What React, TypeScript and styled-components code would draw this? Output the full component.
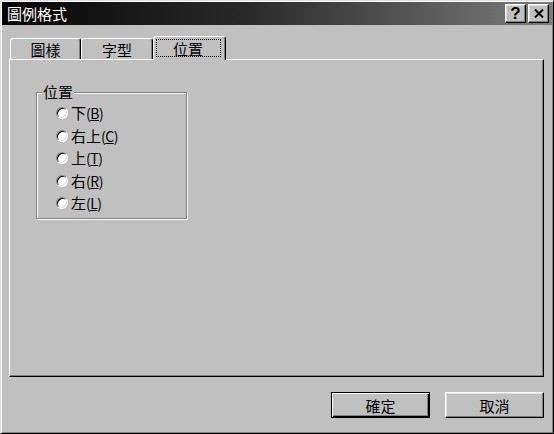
import * as React from 'react';
import styled, { createGlobalStyle } from 'styled-components';

const GlobalStyle = createGlobalStyle`
    html, body {
        margin: 0;
        padding: 0;
        background: #c0c0c0;
    }

    body {
        font-family: "Noto Sans CJK TC", "Noto Sans CJK SC", sans-serif;
        font-size: 15px;
        color: #000;
    }
`;

const Window = styled.div`
    width: 554px;
    height: 434px;
    box-sizing: border-box;

    display: flex;
    flex-direction: column;

    background: #c0c0c0;
    border: 1px solid;
    border-color: #dfdfdf #000 #000 #dfdfdf;
    box-shadow: inset 1px 1px 0 #fff, inset -1px -1px 0 #808080;
    padding: 1px;
`;

const TitleBar = styled.div`
    height: 23px;
    flex-shrink: 0;

    display: flex;
    align-items: center;

    padding: 0 3px 0 3px;
    background: linear-gradient(to right, #050505 0%, #2a2a2a 45%, #7c7c7c 100%);
`;

const Title = styled.span`
    flex: 1;
    color: #fff;
    font-size: 15px;
    line-height: 18px;
    margin-left: 2px;
`;

const CaptionButton = styled.div`
    width: 21px;
    height: 19px;
    box-sizing: border-box;
    margin-left: 2px;

    display: flex;
    align-items: center;
    justify-content: center;

    background: #c0c0c0;
    border: 1px solid;
    border-color: #fff #000 #000 #fff;
    box-shadow: inset -1px -1px 0 #808080, inset 1px 1px 0 #dfdfdf;

    font-family: "Liberation Sans", Arial, sans-serif;
    font-weight: bold;
    font-size: 17px;
    line-height: 16px;
`;

const Body = styled.div`
    flex: 1;
    display: flex;
    flex-direction: column;
    padding: 11px 8px 0 7px;
`;

const TabRow = styled.div`
    height: 23px;
    display: flex;
    align-items: flex-end;
    padding-left: 1px;
`;

interface TabProps {
    width: number;
    selected?: boolean;
}

const Tab = styled.div<TabProps>`
    width: ${props => props.width}px;
    height: ${props => props.selected ? 24 : 21}px;
    box-sizing: border-box;

    display: flex;
    align-items: center;
    justify-content: center;

    position: relative;
    z-index: ${props => props.selected ? 2 : 0};
    margin-bottom: ${props => props.selected ? -1 : 0}px;
    padding-top: 1px;
    padding-bottom: ${props => props.selected ? 2 : 0}px;

    background: #c0c0c0;
    border-top: 1px solid #fff;
    border-left: 1px solid #fff;
    border-right: 1px solid #000;
    border-radius: 3px 3px 0 0;
    box-shadow: inset -1px 0 0 #808080;

    font-size: 15px;
    line-height: 17px;
`;

const FocusRing = styled.span`
    width: 65px;
    height: 18px;
    box-sizing: border-box;
    margin-right: 3px;

    display: flex;
    align-items: center;
    justify-content: center;

    border: 1px dotted #000;
`;

const Panel = styled.div`
    height: 318px;
    box-sizing: border-box;

    border: 1px solid;
    border-color: #fff #000 #000 #fff;
    box-shadow: inset -1px -1px 0 #808080;
    padding: 0 0 0 26px;
`;

const GroupBox = styled.fieldset`
    width: 151px;
    height: 136px;
    box-sizing: border-box;

    margin: 23px 0 0 0;
    padding: 1px 0 0 5px;

    border: 1px solid #808080;
    box-shadow: inset 1px 1px 0 #fff, 1px 1px 0 #fff;
`;

const GroupLabel = styled.legend`
    padding: 0 1px;
    background: #c0c0c0;
    font-size: 15px;
    line-height: 18px;
`;

const RadioRow = styled.label`
    height: 22.5px;
    display: flex;
    align-items: center;
    padding-left: 14px;
    gap: 3px;

    font-size: 15px;
    line-height: 17px;
    white-space: nowrap;
`;

const RadioCircle = styled.span`
    width: 12px;
    height: 12px;
    box-sizing: border-box;
    flex-shrink: 0;

    border-radius: 50%;
    border: 1px solid;
    border-color: #808080 #fff #fff #808080;
    box-shadow: inset 1px 1px 0 #000, inset -1px -1px 0 #dfdfdf;
    background: #fff;
`;

const Mnemonic = styled.span`
    font-size: 14px;
    letter-spacing: -0.5px;
`;

const ButtonRow = styled.div`
    display: flex;
    justify-content: flex-end;
    gap: 15px;
    margin-top: 15px;
`;

interface PushButtonProps {
    primary?: boolean;
}

const PushButton = styled.div<PushButtonProps>`
    width: 99px;
    height: 26px;
    box-sizing: border-box;

    display: flex;
    align-items: center;
    justify-content: center;

    background: #c0c0c0;
    border: 1px solid;
    border-color: ${props => props.primary ? '#000' : '#fff #000 #000 #fff'};
    box-shadow: ${props => props.primary
        ? 'inset 1px 1px 0 #fff, inset -1px -1px 0 #000, inset -2px -2px 0 #808080'
        : 'inset -1px -1px 0 #808080, inset 1px 1px 0 #dfdfdf'};

    font-size: 15px;
    line-height: 17px;
`;

const positions = [
    { label: '下', key: 'B' },
    { label: '右上', key: 'C' },
    { label: '上', key: 'T' },
    { label: '右', key: 'R' },
    { label: '左', key: 'L' },
];

const App: React.FC = () => {
    return (
        <React.Fragment>
            <GlobalStyle />
            <Window>

                <TitleBar>
                    <Title>圖例格式</Title>
                    <CaptionButton>?</CaptionButton>
                    <CaptionButton>
                        <svg width="10" height="9" viewBox="0 0 10 9">
                            <path d="M1 0.5 L9 8.5 M9 0.5 L1 8.5" stroke="#000" strokeWidth="2" />
                        </svg>
                    </CaptionButton>
                </TitleBar>

                <Body>
                    <TabRow>
                        <Tab width={71}>圖樣</Tab>
                        <Tab width={72}>字型</Tab>
                        <Tab width={73} selected><FocusRing>位置</FocusRing></Tab>
                    </TabRow>

                    <Panel>
                        <GroupBox>
                            <GroupLabel>位置</GroupLabel>
                            {
                                positions.map(p => (
                                    <RadioRow key={p.key}>
                                        <RadioCircle />
                                        <span>{p.label}<Mnemonic>(<u>{p.key}</u>)</Mnemonic></span>
                                    </RadioRow>
                                ))
                            }
                        </GroupBox>
                    </Panel>

                    <ButtonRow>
                        <PushButton primary>確定</PushButton>
                        <PushButton>取消</PushButton>
                    </ButtonRow>
                </Body>

            </Window>
        </React.Fragment>
    );
};

export default App;
